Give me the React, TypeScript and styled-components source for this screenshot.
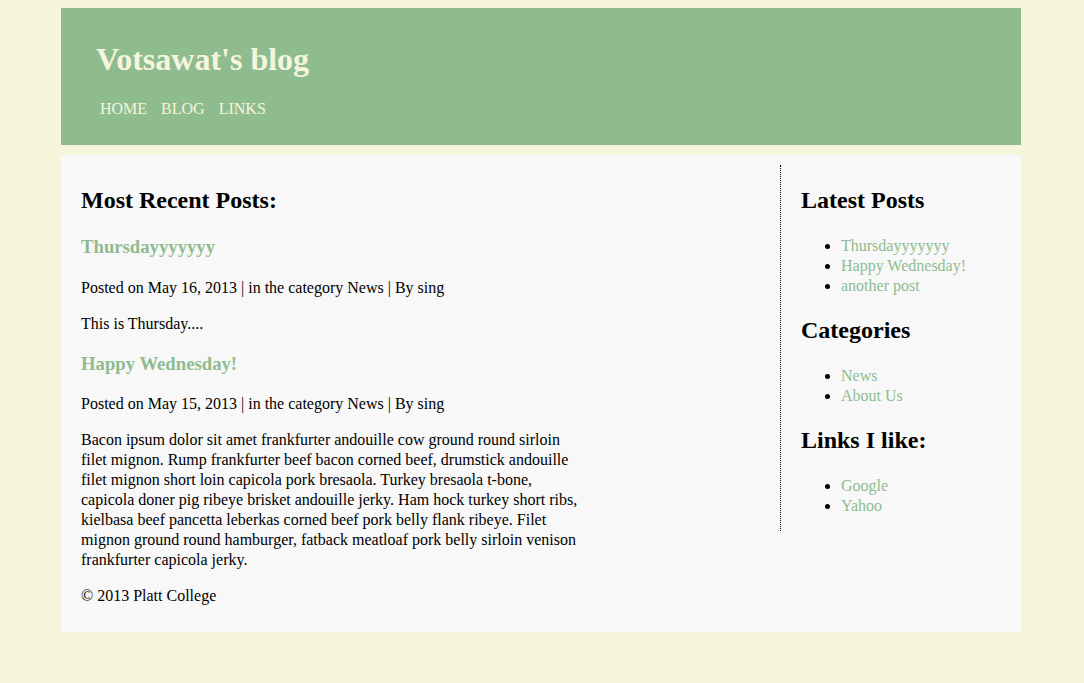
import React from "react";
import styled, { createGlobalStyle } from "styled-components";

const Global = createGlobalStyle`
  html, body { margin: 0; padding: 0; }
  body {
    background: #f5f5dc;
    font-family: "Liberation Serif", "Times New Roman", serif;
    font-size: 16px;
    color: #000;
    padding: 8px 2px 8px 0;
  }
`;

const Wrapper = styled.div`
  width: 960px;
  margin: 0 auto;
`;

const Header = styled.header`
  background: #8fbc8f;
  height: 137px;
  padding: 0 35px;
  box-sizing: border-box;
  overflow: hidden;
`;

const Title = styled.h1`
  color: #f5f5dc;
  font-size: 32px;
  font-weight: bold;
  margin: 33px 0 0 0;
  line-height: 37px;
`;

const Nav = styled.nav`
  display: flex;
  gap: 14px;
  margin: 22px 0 0 4px;
`;

const NavLink = styled.a`
  color: #f5f5dc;
  text-decoration: none;
  font-size: 16px;
`;

const Content = styled.div`
  background: #f8f8f8;
  margin-top: 10px;
  padding: 10px 20px 9.5px;
  display: flex;
  justify-content: space-between;
  align-items: flex-start;
`;

const Main = styled.main`
  width: 500px;
`;

const Sidebar = styled.aside`
  width: 200px;
  border-left: 1px dotted #000;
  padding: 1px 0 0 20px;
`;

const H2 = styled.h2`
  font-size: 24px;
  font-weight: bold;
  margin: 20px 0;
  line-height: 30px;
`;

const SideH2 = styled(H2)`
  margin: 19px 0 20px;
`;

const PostTitle = styled.h3`
  font-size: 18.72px;
  font-weight: bold;
  margin: 18px 0 18.5px;
  line-height: 24px;
  a {
    color: #8fbc8f;
    text-decoration: none;
  }
`;

const P = styled.p`
  margin: 16px 0;
  line-height: 20px;
`;

const List = styled.ul`
  margin: 21px 0 15px;
  padding-left: 40px;
  line-height: 20px;
  list-style: disc;
`;

const Item = styled.li`
  a {
    color: #8fbc8f;
    text-decoration: none;
  }
`;

const posts = [
  {
    title: "Thursdayyyyyyy",
    date: "May 16, 2013",
    body: "This is Thursday....",
  },
  {
    title: "Happy Wednesday!",
    date: "May 15, 2013",
    body:
      "Bacon ipsum dolor sit amet frankfurter andouille cow ground round sirloin filet mignon. Rump frankfurter beef bacon corned beef, drumstick andouille filet mignon short loin capicola pork bresaola. Turkey bresaola t-bone, capicola doner pig ribeye brisket andouille jerky. Ham hock turkey short ribs, kielbasa beef pancetta leberkas corned beef pork belly flank ribeye. Filet mignon ground round hamburger, fatback meatloaf pork belly sirloin venison frankfurter capicola jerky.",
  },
];

const sections = [
  { title: "Latest Posts", items: ["Thursdayyyyyyy", "Happy Wednesday!", "another post"] },
  { title: "Categories", items: ["News", "About Us"] },
  { title: "Links I like:", items: ["Google", "Yahoo"] },
];

export default function App() {
  return (
    <>
      <Global />
      <Wrapper>
        <Header>
          <Title>Votsawat's blog</Title>
          <Nav>
            <NavLink href="#">HOME</NavLink>
            <NavLink href="#">BLOG</NavLink>
            <NavLink href="#">LINKS</NavLink>
          </Nav>
        </Header>
        <Content>
          <Main>
            <H2>Most Recent Posts:</H2>
            {posts.map((p) => (
              <article key={p.title}>
                <PostTitle>
                  <a href="#">{p.title}</a>
                </PostTitle>
                <P>
                  Posted on {p.date} | in the category News | By sing
                </P>
                <P>{p.body}</P>
              </article>
            ))}
            <P>© 2013 Platt College</P>
          </Main>
          <Sidebar>
            {sections.map((s) => (
              <section key={s.title}>
                <SideH2>{s.title}</SideH2>
                <List>
                  {s.items.map((i) => (
                    <Item key={i}>
                      <a href="#">{i}</a>
                    </Item>
                  ))}
                </List>
              </section>
            ))}
          </Sidebar>
        </Content>
      </Wrapper>
    </>
  );
}
